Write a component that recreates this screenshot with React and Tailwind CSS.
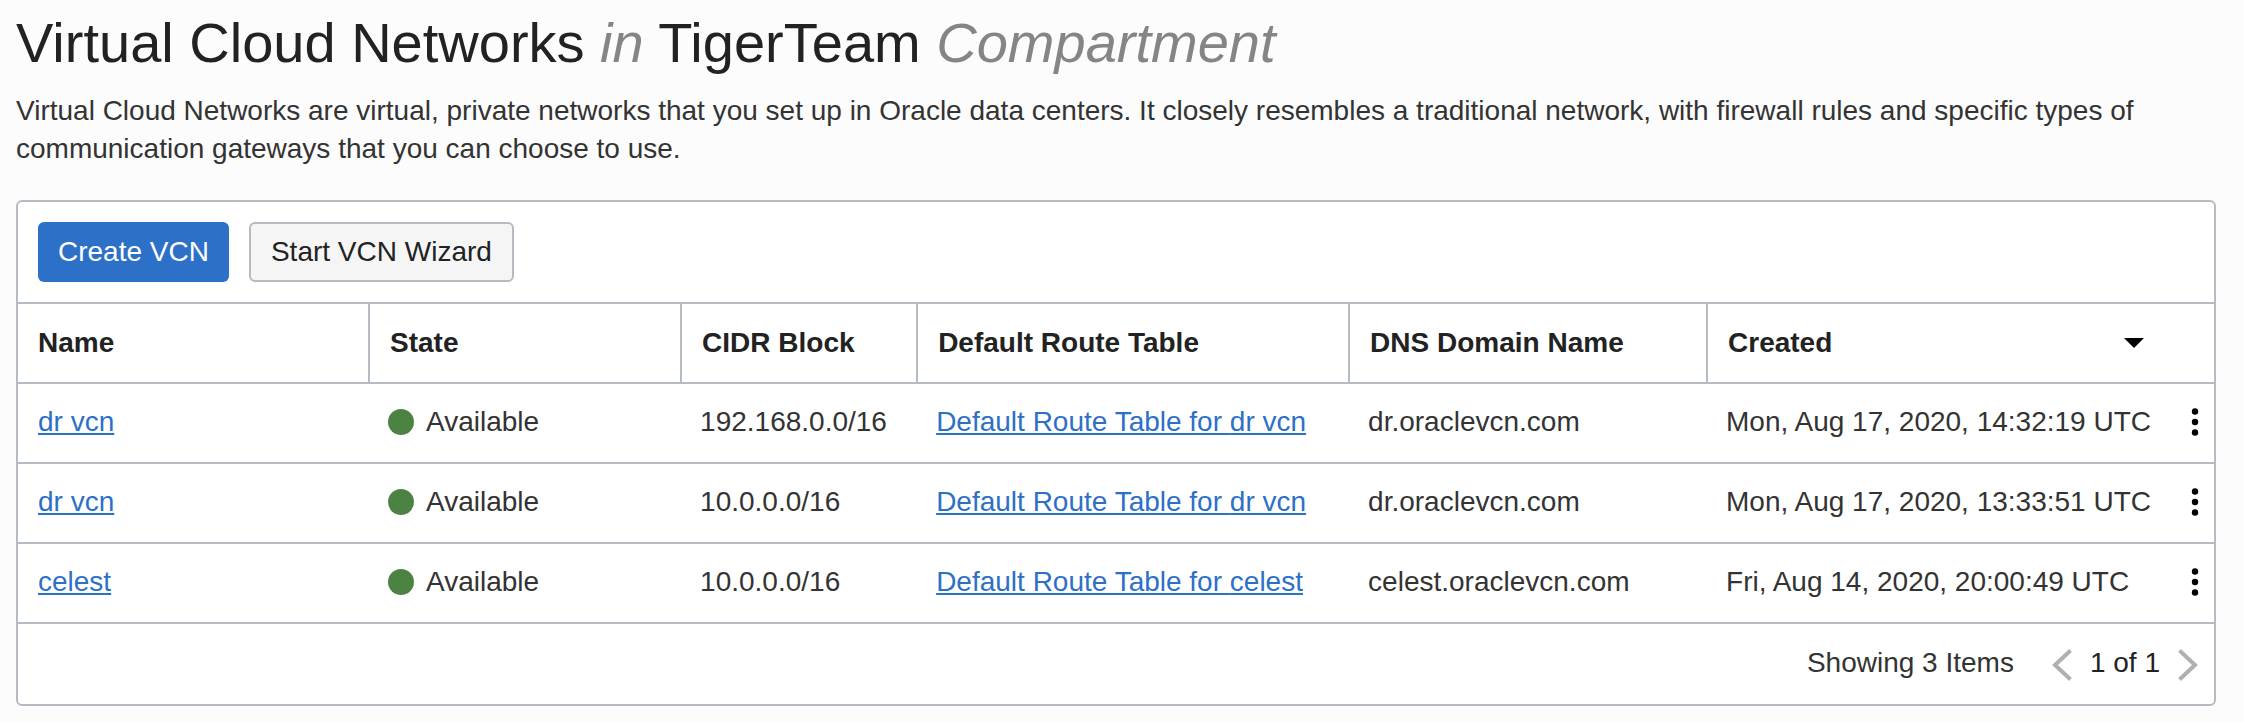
const rows = [
  { id: 1, name: "dr vcn", cidr: "192.168.0.0/16", dns: "dr.oraclevcn.com", created: "Mon, Aug 17, 2020, 14:32:19 UTC" },
  { id: 2, name: "dr vcn", cidr: "10.0.0.0/16", dns: "dr.oraclevcn.com", created: "Mon, Aug 17, 2020, 13:33:51 UTC" },
  { id: 3, name: "celest", cidr: "10.0.0.0/16", dns: "celest.oraclevcn.com", created: "Fri, Aug 14, 2020, 20:00:49 UTC" },
];

function HeaderCell({ children }) {
  return (
    <th
      scope="col"
      className="h-20 border-t-2 border-l-2 border-[#b6bac2] px-5 py-0 text-left font-bold text-[#222222] first:border-l-0"
    >
      {children}
    </th>
  );
}

function Cell({ children }) {
  return <td className="h-20 border-t-2 border-[#b6bac2] px-5 pt-0 pb-0.5 last:pr-2">{children}</td>;
}

function TextLink({ children }) {
  return (
    <a href="#" className="text-[#2d70c8] underline decoration-2 underline-offset-2">
      {children}
    </a>
  );
}

function Chevron({ d }) {
  return (
    <svg viewBox="0 0 20 32" className="h-8 w-5" fill="none" stroke="#b0b0b0" strokeWidth="4" aria-hidden="true">
      <path d={d} />
    </svg>
  );
}

export default function App() {
  return (
    <main className="min-h-screen bg-[#fcfcfc] pt-3 pr-7 pb-4 pl-4 font-['Liberation_Sans',Arial,sans-serif] text-[28px] leading-[38px] text-[#333333]">
      <h1 className="text-[56px] leading-[62px] text-[#222222]">
        Virtual Cloud Networks <em className="text-[#858585]">in</em> TigerTeam{" "}
        <em className="text-[#858585]">Compartment</em>
      </h1>
      <p className="mt-[18px]">
        Virtual Cloud Networks are virtual, private networks that you set up in Oracle data centers. It closely
        resembles a traditional network, with firewall rules and specific types of communication gateways that you can
        choose to use.
      </p>

      <section className="mt-8 overflow-hidden rounded-md border-2 border-[#b6bac2] bg-white">
        <div className="flex gap-5 p-5">
          <button type="button" className="h-15 rounded-md bg-[#2d70c8] px-5 text-white">
            Create VCN
          </button>
          <button type="button" className="h-15 rounded-md border-2 border-[#b6bac2] bg-[#f5f5f5] px-5 text-[#222222]">
            Start VCN Wizard
          </button>
        </div>

        <table className="w-full table-fixed border-separate border-spacing-0 whitespace-nowrap">
          <colgroup>
            <col className="w-[15.94%]" />
            <col className="w-[14.21%]" />
            <col className="w-[10.75%]" />
            <col className="w-[19.67%]" />
            <col className="w-[16.3%]" />
            <col />
          </colgroup>
          <thead>
            <tr>
              <HeaderCell>Name</HeaderCell>
              <HeaderCell>State</HeaderCell>
              <HeaderCell>CIDR Block</HeaderCell>
              <HeaderCell>Default Route Table</HeaderCell>
              <HeaderCell>DNS Domain Name</HeaderCell>
              <HeaderCell>
                <button type="button" className="flex w-full items-center justify-between pr-[50px]">
                  Created
                  <svg viewBox="0 0 20 10" className="h-[10px] w-5" aria-hidden="true">
                    <path d="M0 0h20L10 10z" fill="#000" />
                  </svg>
                </button>
              </HeaderCell>
            </tr>
          </thead>
          <tbody>
            {rows.map((row) => (
              <tr key={row.id}>
                <Cell>
                  <TextLink>{row.name}</TextLink>
                </Cell>
                <Cell>
                  <span className="flex items-center gap-3">
                    <span className="size-[26px] rounded-full bg-[#4c8343]" />
                    Available
                  </span>
                </Cell>
                <Cell>{row.cidr}</Cell>
                <Cell>
                  <TextLink>Default Route Table for {row.name}</TextLink>
                </Cell>
                <Cell>{row.dns}</Cell>
                <Cell>
                  <span className="flex items-center justify-between">
                    {row.created}
                    <button type="button" aria-label="Actions" className="flex h-8 w-[22px] items-center justify-center">
                      <svg viewBox="0 0 8 28" className="h-7 w-2" aria-hidden="true">
                        <circle cx="4" cy="3.5" r="3.2" />
                        <circle cx="4" cy="14" r="3.2" />
                        <circle cx="4" cy="24.5" r="3.2" />
                      </svg>
                    </button>
                  </span>
                </Cell>
              </tr>
            ))}
          </tbody>
        </table>

        <div className="flex h-[82px] items-center justify-end border-t-2 border-[#b6bac2] pr-4 pb-0.5">
          <span className="mr-[38px]">Showing 3 Items</span>
          <nav aria-label="Pagination" className="flex items-center gap-[18px] text-[#222222]">
            <button type="button" aria-label="Previous page" className="pt-1">
              <Chevron d="M18.5 1.5L3 16l15.5 14.5" />
            </button>
            <span>1 of 1</span>
            <button type="button" aria-label="Next page" className="pt-1">
              <Chevron d="M1.5 1.5L17 16 1.5 30.5" />
            </button>
          </nav>
        </div>
      </section>
    </main>
  );
}
